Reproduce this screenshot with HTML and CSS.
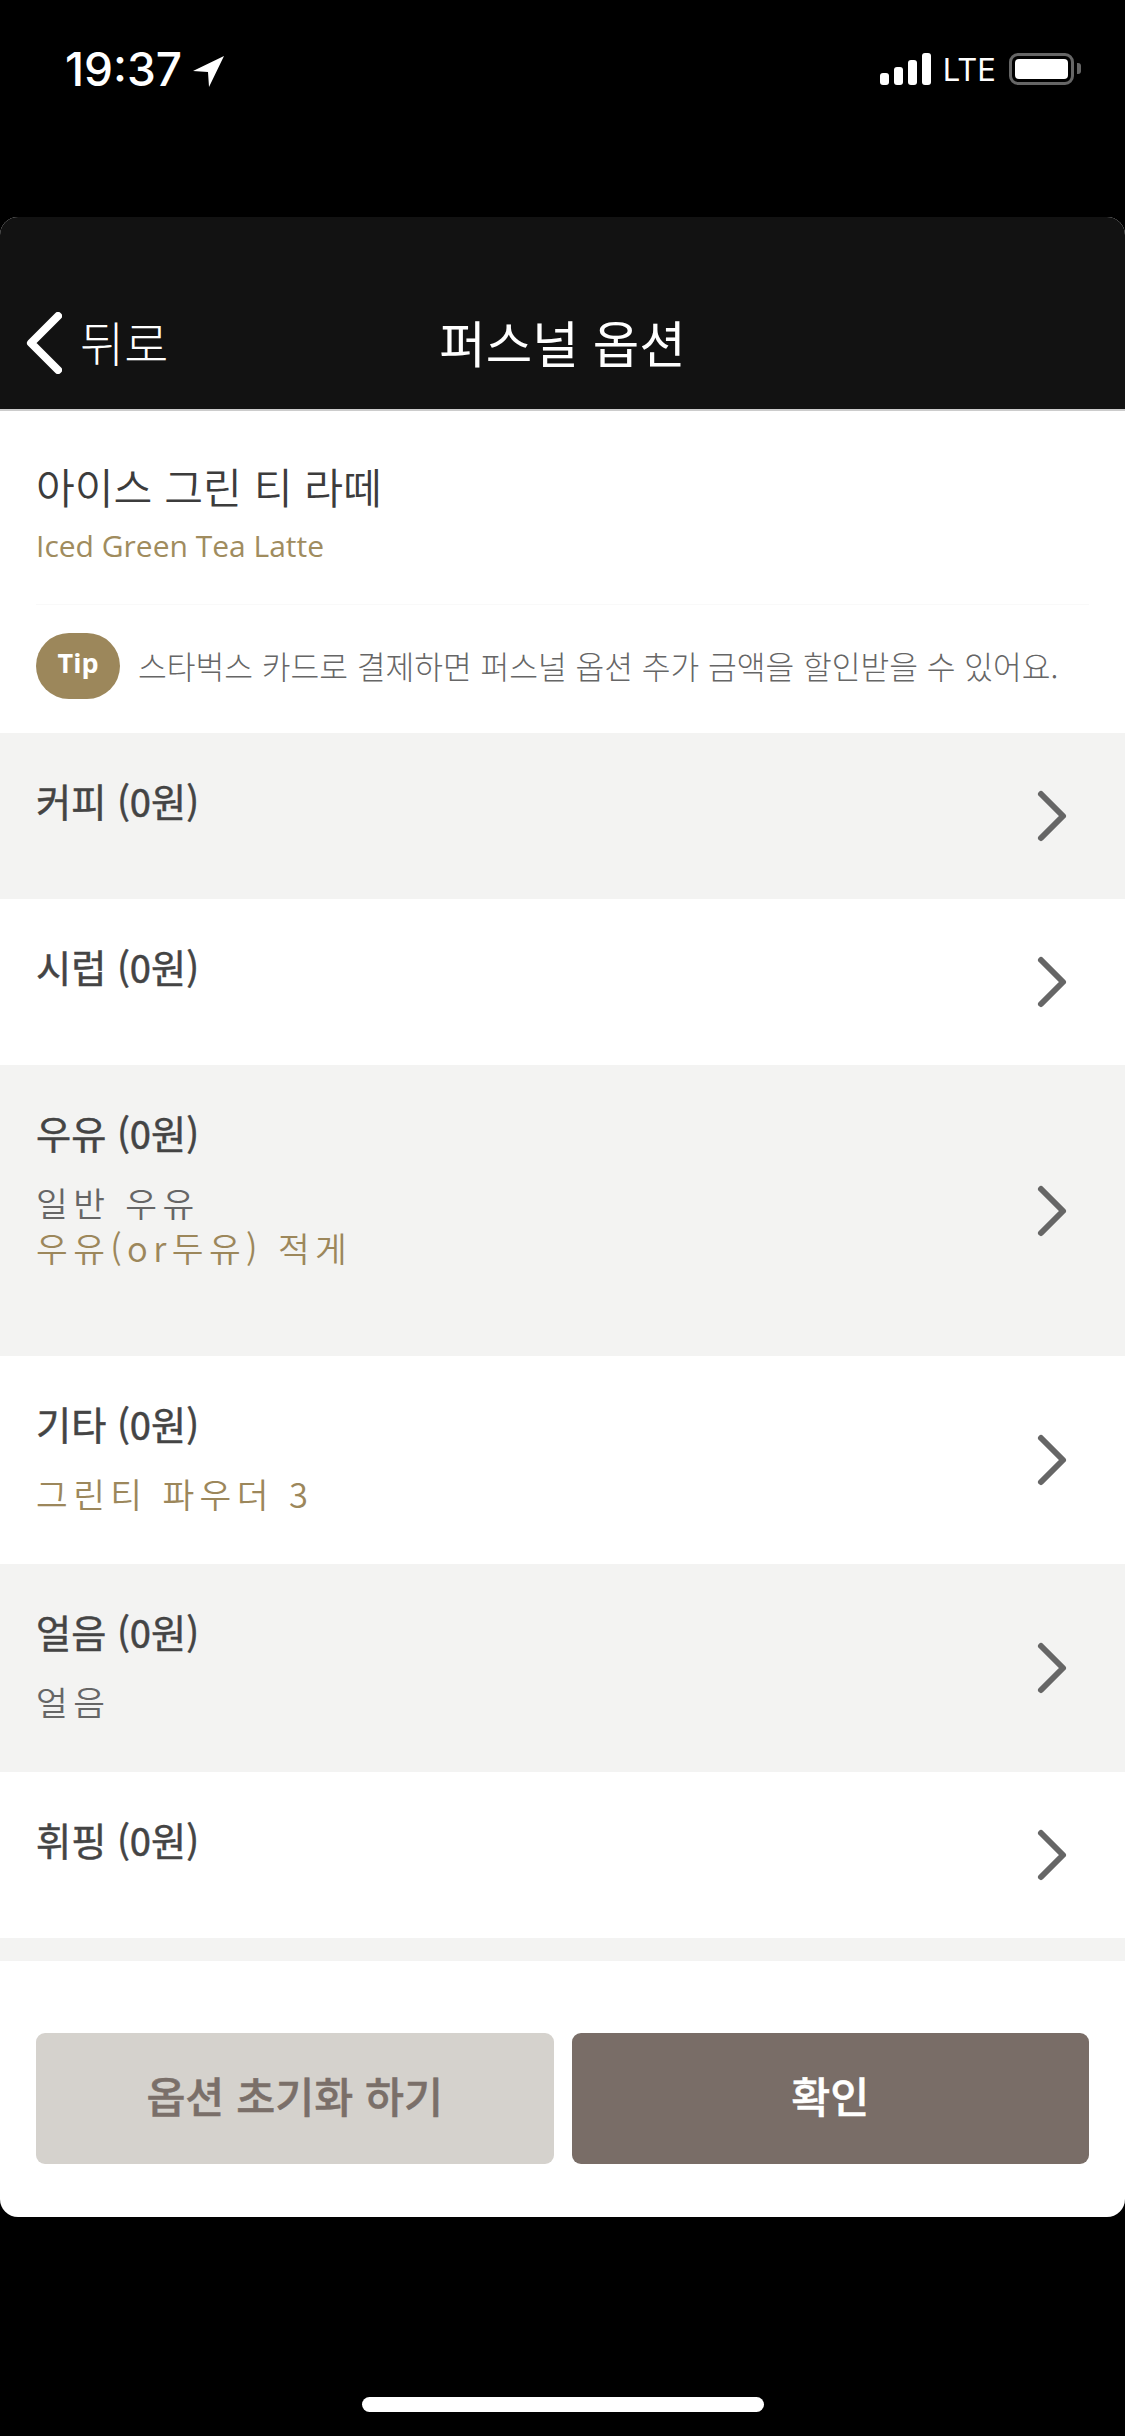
FILE: index.html
```html
<!DOCTYPE html>
<html lang="ko">
<head>
	<meta charset="utf-8">
	<title>퍼스널 옵션</title>
	<link rel="stylesheet" href="styles.css">
</head>
<body>
<div class="status">
	<div class="clock">
		<span>19:37</span>
		<svg class="arrow" width="32" height="32" viewBox="0 0 32 32"><path d="M31 0 L0 15 L15 16 L16 31 Z" fill="#fff"/></svg>
	</div>
	<div class="signal">
		<div class="bars"><i class="b1"></i><i class="b2"></i><i class="b3"></i><i class="b4"></i></div>
		<span class="lte">LTE</span>
		<div class="battery"><div class="charge"></div></div>
		<div class="nub"></div>
	</div>
</div>

<div class="sheet">
	<div class="nav">
		<div class="back">
			<svg width="36" height="62" viewBox="0 0 36 62"><path d="M32 4 L5 31 L32 58" fill="none" stroke="#fff" stroke-width="8" stroke-linecap="round" stroke-linejoin="round"/></svg>
			<span>뒤로</span>
		</div>
		<div class="nav-title">퍼스널 옵션</div>
		<div></div>
	</div>

	<div class="drink">
		<div class="name">아이스 그린 티 라떼</div>
		<div class="eng">Iced Green Tea Latte</div>
	</div>
	<div class="tip">
		<span class="pill">Tip</span>
		<span class="tip-text">스타벅스 카드로 결제하면 퍼스널 옵션 추가 금액을 할인받을 수 있어요.</span>
	</div>

	<div class="row row-plain grey">
		<div class="row-text"><div class="row-title">커피 (0원)</div></div>
		<svg class="more" width="32" height="54" viewBox="0 0 32 54"><path d="M5 5 L27 27 L5 49" fill="none" stroke="#666" stroke-width="6" stroke-linecap="round" stroke-linejoin="round"/></svg>
	</div>
	<div class="row row-plain">
		<div class="row-text"><div class="row-title">시럽 (0원)</div></div>
		<svg class="more" width="32" height="54" viewBox="0 0 32 54"><path d="M5 5 L27 27 L5 49" fill="none" stroke="#666" stroke-width="6" stroke-linecap="round" stroke-linejoin="round"/></svg>
	</div>
	<div class="row row-two grey">
		<div class="row-text">
			<div class="row-title">우유 (0원)</div>
			<div class="sub">일반 우유</div>
			<div class="sub gold">우유(or두유) 적게</div>
		</div>
		<svg class="more" width="32" height="54" viewBox="0 0 32 54"><path d="M5 5 L27 27 L5 49" fill="none" stroke="#666" stroke-width="6" stroke-linecap="round" stroke-linejoin="round"/></svg>
	</div>
	<div class="row row-one">
		<div class="row-text">
			<div class="row-title">기타 (0원)</div>
			<div class="sub gold">그린티 파우더 3</div>
		</div>
		<svg class="more" width="32" height="54" viewBox="0 0 32 54"><path d="M5 5 L27 27 L5 49" fill="none" stroke="#666" stroke-width="6" stroke-linecap="round" stroke-linejoin="round"/></svg>
	</div>
	<div class="row row-one grey">
		<div class="row-text">
			<div class="row-title">얼음 (0원)</div>
			<div class="sub">얼음</div>
		</div>
		<svg class="more" width="32" height="54" viewBox="0 0 32 54"><path d="M5 5 L27 27 L5 49" fill="none" stroke="#666" stroke-width="6" stroke-linecap="round" stroke-linejoin="round"/></svg>
	</div>
	<div class="row row-plain">
		<div class="row-text"><div class="row-title">휘핑 (0원)</div></div>
		<svg class="more" width="32" height="54" viewBox="0 0 32 54"><path d="M5 5 L27 27 L5 49" fill="none" stroke="#666" stroke-width="6" stroke-linecap="round" stroke-linejoin="round"/></svg>
	</div>
	<div class="strip"></div>

	<div class="actions">
		<button class="btn reset">옵션 초기화 하기</button>
		<button class="btn ok">확인</button>
	</div>
</div>

<div class="home"><div class="home-bar"></div></div>
</body>
</html>
```

FILE: styles.css
```css
* {
	box-sizing: border-box;
}

body {
	margin: 0;
	width: 1125px;
	height: 2436px;
	overflow: hidden;
	background: #000;
	font-family: "Noto Sans CJK KR", "Noto Sans", sans-serif;
	color: #444;
}

/* status bar */
.status {
	height: 217px;
	padding: 53px 44px 0 65px;
	display: flex;
	justify-content: space-between;
	align-items: flex-start;
	color: #fff;
}

.clock {
	display: flex;
	align-items: flex-start;
	gap: 11px;
	font-family: Inter, "Liberation Sans", sans-serif;
	font-size: 46px;
	font-weight: 500;
	line-height: 32px;
}

.arrow {
	margin-top: 3px;
}

.signal {
	display: flex;
	align-items: flex-start;
}

.bars {
	display: flex;
	align-items: flex-end;
	gap: 5px;
	height: 32px;
	margin-right: 12px;
}

.bars i {
	display: block;
	width: 9px;
	background: #fff;
	border-radius: 3px;
}

.b1 { height: 12px; }
.b2 { height: 18px; }
.b3 { height: 25px; }
.b4 { height: 32px; }

.lte {
	font-family: Inter, "Liberation Sans", sans-serif;
	font-size: 31px;
	line-height: 34px;
	margin-right: 13px;
}

.battery {
	width: 65px;
	height: 32px;
	padding: 3px;
	border: 3px solid #666;
	border-radius: 9px;
}

.charge {
	height: 100%;
	background: #fff;
	border-radius: 4px;
}

.nub {
	width: 4px;
	height: 11px;
	margin: 10px 0 0 3px;
	background: #666;
	border-radius: 0 3px 3px 0;
}

/* sheet */
.sheet {
	height: 2000px;
	background: #fff;
	border-radius: 18px;
	overflow: hidden;
}

.nav {
	height: 194px;
	padding: 60px 26px 0;
	background: #121212;
	border-bottom: 2px solid #ccc;
	color: #fff;
	display: grid;
	grid-template-columns: 1fr auto 1fr;
	align-items: center;
}

.back {
	display: flex;
	align-items: center;
	gap: 18px;
	font-size: 48px;
	font-weight: 300;
}

.back span {
	margin-bottom: 5px;
}

.nav-title {
	padding-bottom: 5px;
	font-size: 50.5px;
	font-weight: 400;
}

.drink {
	margin: 0 36px;
	height: 194px;
	padding-top: 45px;
	border-bottom: 1px solid #f9f9f9;
}

.name {
	font-size: 42.2px;
	font-weight: 350;
	line-height: 60px;
	color: #3c3c3c;
}

.eng {
	margin-top: 10px;
	font-family: "Open Sans", sans-serif;
	font-size: 30px;
	font-weight: 400;
	line-height: 40px;
	color: #a08c5e;
}

.tip {
	height: 128px;
	padding: 28px 36px 0;
	display: flex;
	align-items: flex-start;
	gap: 18px;
}

.pill {
	width: 84px;
	height: 66px;
	border-radius: 33px;
	background: #9c875b;
	color: #fff;
	font-family: "Open Sans", sans-serif;
	font-size: 27px;
	font-weight: 700;
	line-height: 60px;
	text-align: center;
}

.tip-text {
	font-size: 31.25px;
	font-weight: 300;
	line-height: 66px;
	color: #666;
	white-space: nowrap;
}

.row {
	padding: 43px 57px 0 36px;
	display: flex;
	justify-content: space-between;
	align-items: flex-start;
}

.row-plain { height: 166px; }
.row-one { height: 208px; }
.row-two { height: 291px; }

.grey {
	background: #f3f3f2;
}

.row-title {
	font-size: 38.2px;
	font-weight: 400;
	-webkit-text-stroke: 0.5px #444;
	line-height: 50px;
	color: #444;
}

.sub {
	font-size: 34.5px;
	font-weight: 350;
	line-height: 45px;
	letter-spacing: 5.4px;
	color: #666;
}

.row-title + .sub {
	margin-top: 22px;
}

.gold {
	color: #9c875b;
}

.more {
	align-self: center;
	margin-top: -43px;
}

.strip {
	height: 23px;
	background: #f3f3f2;
}

.actions {
	padding: 72px 36px 0;
	display: flex;
	gap: 18px;
}

.btn {
	flex: 1;
	height: 131px;
	padding: 0 0 8px;
	border: 0;
	border-radius: 9px;
	font-family: inherit;
	font-size: 42.4px;
	font-weight: 500;
	-webkit-text-stroke: 0.5px currentColor;
}

.reset {
	background: #d5d2cd;
	color: #7a6f69;
}

.ok {
	background: #796d67;
	color: #fff;
}

/* home indicator */
.home {
	height: 219px;
	padding: 180px 0 0 362px;
}

.home-bar {
	width: 402px;
	height: 15px;
	background: #fff;
	border-radius: 8px;
}
```
